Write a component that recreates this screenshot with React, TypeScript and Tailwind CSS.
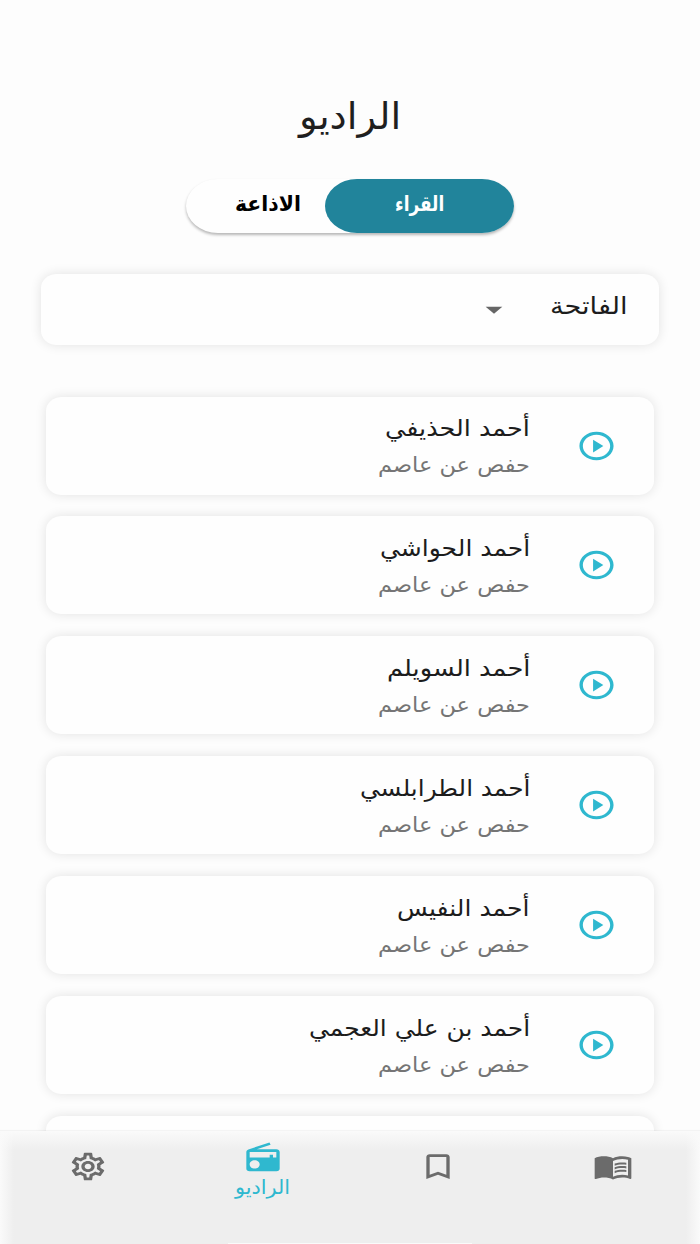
import React, { useLayoutEffect, useRef, useState } from 'react';
import {
  MdArrowDropDown,
  MdBookmarkBorder,
  MdMenuBook,
  MdOutlineSettings,
  MdPlayCircleOutline,
  MdRadio,
} from 'react-icons/md';

interface Reciter {
  id: number;
  name: string;
  width: number;
}

const RECITERS: Reciter[] = [
  { id: 1, name: 'أحمد الحذيفي', width: 145 },
  { id: 2, name: 'أحمد الحواشي', width: 150 },
  { id: 3, name: 'أحمد السويلم', width: 143 },
  { id: 4, name: 'أحمد الطرابلسي', width: 170 },
  { id: 5, name: 'أحمد النفيس', width: 133 },
  { id: 6, name: 'أحمد بن علي العجمي', width: 221 },
];

interface FitTextProps {
  text: string;
  width: number;
  className: string;
}

// Stretches a single line of text to the given width
const FitText: React.FC<FitTextProps> = ({ text, width, className }) => {
  const ref = useRef<HTMLSpanElement>(null);
  const [scale, setScale] = useState(1);

  useLayoutEffect(() => {
    if (ref.current) setScale(width / ref.current.offsetWidth);
  }, [text, width]);

  return (
    <div className={`shrink-0 whitespace-nowrap ${className}`} style={{ width }}>
      <span ref={ref} className="inline-block origin-right" style={{ transform: `scaleX(${scale})` }}>
        {text}
      </span>
    </div>
  );
};

const ReciterCard: React.FC<{ reciter: Reciter }> = ({ reciter }) => (
  <div className="flex h-[98px] shrink-0 items-center rounded-[16px/14px] bg-[#fefefe] pr-[37px] shadow-[0_0_12px_rgba(0,0,0,0.11)]">
    <MdPlayCircleOutline preserveAspectRatio="none" className="h-[34px] w-[41px] shrink-0 text-[#2fb8cf]" />
    <div className="mr-[46px] flex flex-col pt-[3px]">
      <FitText text={reciter.name} width={reciter.width} className="h-[37px] text-[23px] leading-[37px] text-[#1c1c1c]" />
      <FitText text="حفص عن عاصم" width={152} className="h-[37px] text-[21px] leading-[37px] text-[#757575]" />
    </div>
  </div>
);

const App: React.FC = () => (
  <div
    dir="rtl"
    className="flex h-[1244px] w-[700px] flex-col overflow-hidden bg-[#fdfdfd] font-['DejaVu_Sans',sans-serif]"
  >
    <main className="flex min-h-0 flex-1 flex-col overflow-hidden">
      <header className="flex h-[179px] shrink-0 justify-center pt-[92px]">
        <FitText text="الراديو" width={102} className="h-[50px] text-[37px] leading-[50px] text-[#1f1f1f]" />
      </header>

      {/* Tabs */}
      <div className="mx-auto flex h-[54px] w-[328px] shrink-0 rounded-[32px/27px] bg-[#fefefe] shadow-[0_2px_3px_rgba(0,0,0,0.28)]">
        <button className="flex w-[189px] justify-center rounded-[32px/27px] bg-[#21849b]">
          <FitText text="القراء" width={49} className="text-[21px] leading-[50px] font-bold text-white" />
        </button>
        <button className="flex flex-1 justify-center pl-[25px]">
          <FitText text="الاذاعة" width={66} className="text-[21px] leading-[50px] font-bold text-black" />
        </button>
      </div>

      {/* Surah picker */}
      <div className="mx-[41px] mt-[41px] flex h-[71px] shrink-0 items-start rounded-[16px/14px] bg-[#fefefe] pr-[32px] shadow-[0_0_12px_rgba(0,0,0,0.11)]">
        <FitText text="الفاتحة" width={77} className="text-[24px] leading-[65px] text-[#1c1c1c]" />
        <MdArrowDropDown preserveAspectRatio="none" className="mt-[19px] mr-[36px] h-[33px] w-[40px] text-[#666]" />
      </div>

      <div className="mt-[51.6px] flex flex-col gap-[21.9px] px-[46px]">
        {RECITERS.map((reciter) => (
          <ReciterCard key={reciter.id} reciter={reciter} />
        ))}
        <div className="h-[98px] shrink-0 rounded-[16px/14px] bg-[#fefefe] shadow-[0_0_12px_rgba(0,0,0,0.11)]" />
      </div>
    </main>

    <nav className="flex h-[113px] shrink-0 flex-col bg-[#eee] bg-[linear-gradient(to_bottom,#fafafa,#fafafa00_20px),linear-gradient(to_right,#fafafa,#fafafa00_14px,#fafafa00_686px,#fafafa)] shadow-[0_-1px_1px_rgba(0,0,0,0.04)]">
      <div className="grid flex-1 grid-cols-4 text-[#6b6b6b]">
        <NavIcon icon={<MdMenuBook preserveAspectRatio="none" className="h-[33px] w-[40px]" />} />
        <NavIcon icon={<MdBookmarkBorder preserveAspectRatio="none" className="h-[33px] w-[40px]" />} />
        <button className="flex flex-col items-center pt-[10px] text-[#2fb8cf]">
          <MdRadio preserveAspectRatio="none" className="h-[33px] w-[40px]" />
          <FitText text="الراديو" width={55} className="mr-[-3px] text-[20px] leading-[26px]" />
        </button>
        <NavIcon icon={<MdOutlineSettings preserveAspectRatio="none" className="h-[33px] w-[40px]" />} />
      </div>
      <div className="mx-auto h-px w-[244px] bg-[#fafafa]" />
    </nav>
  </div>
);

const NavIcon: React.FC<{ icon: React.ReactNode }> = ({ icon }) => (
  <button className="flex flex-col items-center pt-[19px]">{icon}</button>
);

export default App;
